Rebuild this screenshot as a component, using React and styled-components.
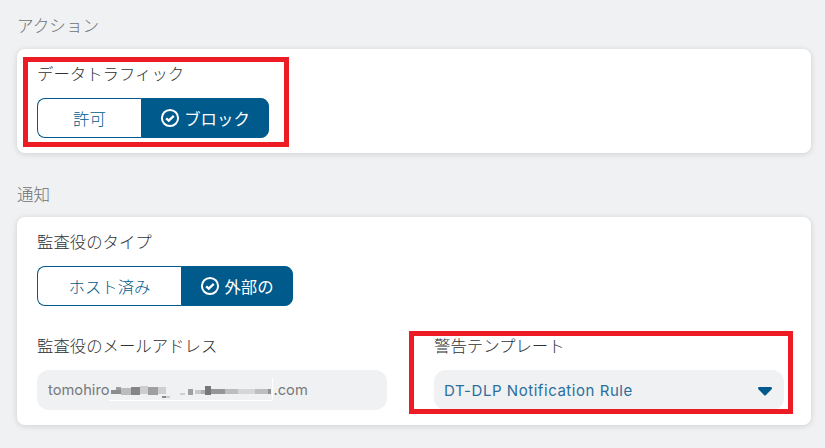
import React from "react";
import styled, { createGlobalStyle } from "styled-components";

const Global = createGlobalStyle`
  html, body { margin: 0; padding: 0; background: #f0f1f3; }
  body { font-family: Inter, "Noto Sans CJK JP", sans-serif; overflow: hidden; }
`;

const Page = styled.div`
  width: 825px;
  height: 448px;
  box-sizing: border-box;
  padding: 14px 14px 0 17px;
  display: flex;
  flex-direction: column;
`;

const SectionTitle = styled.div`
  font-size: 16.6px;
  line-height: 24px;
  height: 24px;
  font-weight: 300;
  color: #6f7174;
  margin-bottom: ${(p) => p.$mb}px;
`;

const Card = styled.section`
  position: relative;
  background: #fff;
  border-radius: 8px;
  box-shadow: 0 1px 6px rgba(0, 0, 0, 0.14);
  padding: ${(p) => p.$pad};
  height: ${(p) => p.$h}px;
  box-sizing: border-box;
  margin-bottom: ${(p) => p.$mb}px;
`;

const Label = styled.div`
  font-size: 16.4px;
  line-height: 24px;
  height: 24px;
  font-weight: 300;
  color: #2f3134;
  margin-bottom: ${(p) => p.$mb}px;
`;

const Toggle = styled.div`
  display: flex;
  height: 40px;
  width: max-content;
  margin-bottom: ${(p) => p.$mb || 0}px;
`;

const Seg = styled.div`
  width: ${(p) => p.$w}px;
  height: 40px;
  box-sizing: border-box;
  display: flex;
  align-items: center;
  justify-content: center;
  gap: 4px;
  font-size: 16.4px;
  font-weight: ${(p) => (p.$active ? 400 : 300)};
  color: ${(p) => (p.$active ? "#fff" : "#005a8c")};
  background: ${(p) => (p.$active ? "#005a8c" : "#fff")};
  border: 1px solid #005a8c;
  border-right-width: ${(p) => (p.$active ? 1 : 0)}px;
  border-radius: ${(p) => (p.$active ? "0 8px 8px 0" : "8px 0 0 8px")};
`;

const Fields = styled.div`
  display: grid;
  grid-template-columns: 350px 350px;
  column-gap: 47px;
`;

const FieldBox = styled.div`
  height: 40px;
  border-radius: 12px;
  background: #f0f1f3;
  box-sizing: border-box;
  padding: 0 10px 0 ${(p) => (p.$select ? 10 : 11)}px;
  display: flex;
  align-items: center;
  justify-content: space-between;
  font-size: ${(p) => (p.$select ? 15 : 14.7)}px;
  letter-spacing: ${(p) => (p.$select ? "0.55px" : "0")};
  color: ${(p) => (p.$select ? "#2a6f9c" : "#77797c")};
`;

const EmailText = styled.span`
  display: flex;
  align-items: center;
`;

const Caret = styled.svg`
  width: 14px;
  height: 9px;
  margin-right: 2px;
  margin-top: 2px;
`;

const Mosaic = styled.svg`
  width: 164px;
  height: 24px;
  flex: none;
`;

const RedFrame = styled.div`
  position: absolute;
  box-sizing: border-box;
  border: 5px solid #ed1c24;
  left: ${(p) => p.$l}px;
  top: ${(p) => p.$t}px;
  width: ${(p) => p.$w}px;
  height: ${(p) => p.$h}px;
  pointer-events: none;
`;

const CheckIcon = () => (
  <svg width="20" height="20" viewBox="0 0 20 20" fill="none" stroke="#fff">
    <circle cx="10" cy="10" r="8.1" strokeWidth="2" />
    <path d="M6.2 10.3l2.6 2.4 5-4.8" strokeWidth="2.4" />
  </svg>
);

const blocks = [
  [2, 12, 10, 4, "#8c8c8e"], [7, 9, 5, 3, "#9d9d9f"], [12, 10, 10, 7, "#bcbcbe"], [22, 9, 9, 8, "#858588"],
  [31, 8, 8, 8, "#cdcdcf"], [39, 9, 10, 8, "#9f9fa1"], [49, 9, 8, 7, "#cfcfd1"], [53, 18, 4, 2, "#88888a"],
  [57, 18, 4, 2, "#cbcbcd"], [71, 15, 5, 2, "#d0d0d2"], [79, 11, 5, 6, "#a0a0a2"], [86, 12, 6, 4, "#c8c8ca"],
  [92, 12, 4, 4, "#b0b0b2"], [96, 8, 6, 9, "#77777a"], [102, 11, 14, 5, "#969699"], [116, 11, 13, 5, "#bdbdbf"],
  [129, 11, 17, 5, "#d6d6d8"], [146, 11, 13, 5, "#bebec0"], [159, 11, 3, 5, "#929294"],
];

export default function App() {
  return (
    <>
      <Global />
      <Page>
        <SectionTitle $mb={11}>アクション</SectionTitle>
        <Card $pad="13px 20px" $h={104} $mb={30}>
          <Label $mb={12}>データトラフィック</Label>
          <Toggle>
            <Seg $w={104}>許可</Seg>
            <Seg $w={128} $active>
              <CheckIcon />
              ブロック
            </Seg>
          </Toggle>
          <RedFrame $l={6} $t={8} $w={266} $h={90} />
        </Card>
        <SectionTitle $mb={10}>通知</SectionTitle>
        <Card $pad="13px 20px" $h={208} $mb={0}>
          <Label $mb={12}>監査役のタイプ</Label>
          <Toggle $mb={28}>
            <Seg $w={144}>ホスト済み</Seg>
            <Seg $w={112} $active>
              <CheckIcon />
              外部の
            </Seg>
          </Toggle>
          <Fields>
            <div>
              <Label $mb={12}>監査役のメールアドレス</Label>
              <FieldBox>
                <EmailText>
                  tomohiro
                  <Mosaic viewBox="0 0 164 24">
                    <path d="M0 22.5H163.5V0" fill="none" stroke="#fff" />
                    {blocks.map(([x, y, w, h, c], i) => (
                      <rect key={i} x={x} y={y} width={w} height={h} fill={c} />
                    ))}
                  </Mosaic>
                  .com
                </EmailText>
              </FieldBox>
            </div>
            <div>
              <Label $mb={12}>警告テンプレート</Label>
              <FieldBox $select>
                DT-DLP Notification Rule
                <Caret viewBox="0 0 14 9">
                  <path d="M0 1.2 Q0 0 1.4 0 H12.6 Q14 0 14 1.2 Q14 1.8 13.4 2.4 L8 8 Q7 9 6 8 L0.6 2.4 Q0 1.8 0 1.2z" fill="#005a8c" />
                </Caret>
              </FieldBox>
            </div>
          </Fields>
          <RedFrame $l={392} $t={114} $w={384} $h={83} />
        </Card>
      </Page>
    </>
  );
}
